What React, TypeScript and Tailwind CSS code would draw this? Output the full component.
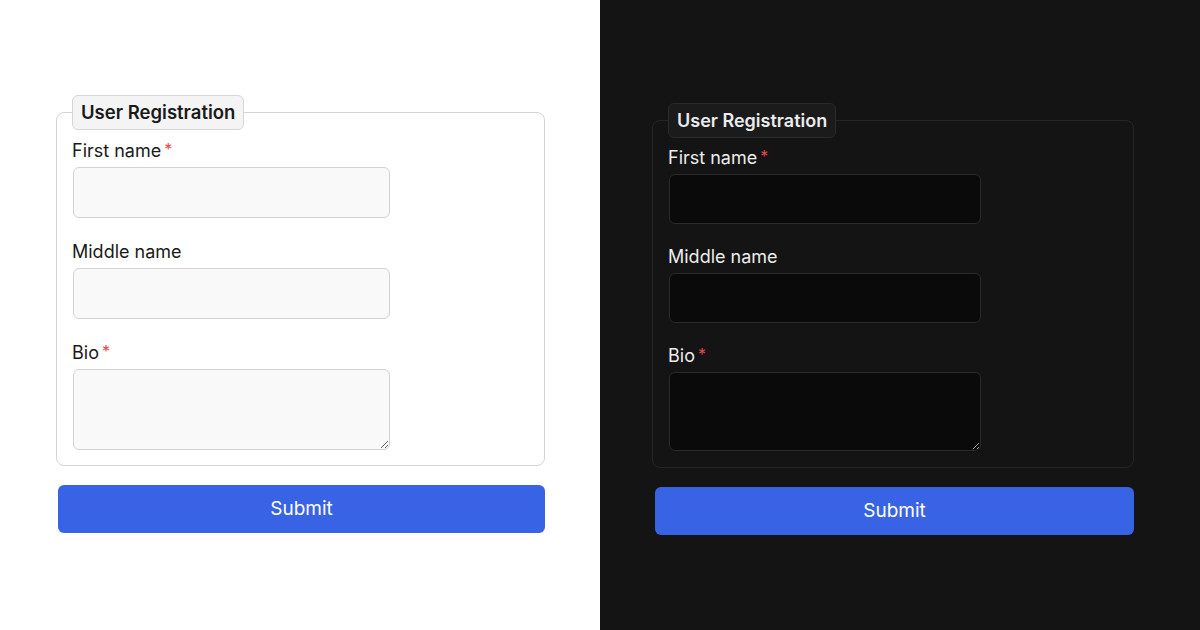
import React from "react";

type Theme = "light" | "dark";

function Field({
  label,
  required,
  dark,
  textarea,
  last,
}: {
  label: string;
  required?: boolean;
  dark: boolean;
  textarea?: boolean;
  last?: boolean;
}) {
  return (
    <div className={`flex flex-col ${last ? "" : dark ? "mb-[21px]" : "mb-[22px]"}`}>
      <label className="-ml-[1px] flex items-start text-[18px] leading-6 mb-1">
        <span>{label}</span>
        {required && <span className="text-[#e5484d] text-[16px] leading-5 ml-[3px]">*</span>}
      </label>
      {textarea ? (
        <textarea
          className={`block rounded-md border resize-y ${
            dark
              ? "w-[312px] h-[79px] bg-[#0a0a0a] border-[#2a2a2a]"
              : "w-[317px] h-[81px] bg-[#f9f9f9] border-[#d2d2d2]"
          }`}
        />
      ) : (
        <input
          className={`block rounded-md border ${
            dark
              ? "w-[312px] h-[50px] bg-[#0a0a0a] border-[#2a2a2a]"
              : "w-[317px] h-[51px] bg-[#f9f9f9] border-[#d2d2d2]"
          }`}
        />
      )}
    </div>
  );
}

function Panel({ theme }: { theme: Theme }) {
  const dark = theme === "dark";
  return (
    <div
      className={`w-[600px] h-[630px] ${
        dark ? "bg-[#141414] text-[#ececec] pl-[52px] pt-[103px]" : "bg-white text-[#1a1a1a] pl-[56px] pt-[95px]"
      }`}
    >
      <form className={dark ? "w-[482px]" : "w-[489px]"}>
        <fieldset
          className={`border rounded-lg ${
            dark ? "border-[#262626] pl-[16px] pt-[8px] pb-[16px]" : "border-[#d4d4d4] pl-[16px] pt-[9px] pb-[15px]"
          }`}
        >
          <legend
            className={`-ml-[1px] h-[35px] flex items-center rounded-md border font-semibold ${
              dark
                ? "px-[8px] text-[18px] bg-[#1b1b1b] border-[#2a2a2a]"
                : "px-[8px] text-[18.5px] bg-[#f4f4f4] border-[#d6d6d6]"
            }`}
          >
            User Registration
          </legend>
          <Field label="First name" required dark={dark} />
          <Field label="Middle name" dark={dark} />
          <Field label="Bio" required dark={dark} textarea last />
        </fieldset>
        <button
          type="button"
          className={`mt-[19px] h-[48px] rounded-md bg-[#3763e4] text-white text-[19px] ${
            dark ? "ml-[3px] w-[479px]" : "ml-[2px] w-[487px]"
          }`}
        >
          Submit
        </button>
      </form>
    </div>
  );
}

export default function App() {
  return (
    <div
      className="flex w-[1200px] h-[630px] overflow-hidden"
      style={{ fontFamily: "Inter, 'Noto Sans', sans-serif" }}
    >
      <Panel theme="light" />
      <Panel theme="dark" />
    </div>
  );
}
